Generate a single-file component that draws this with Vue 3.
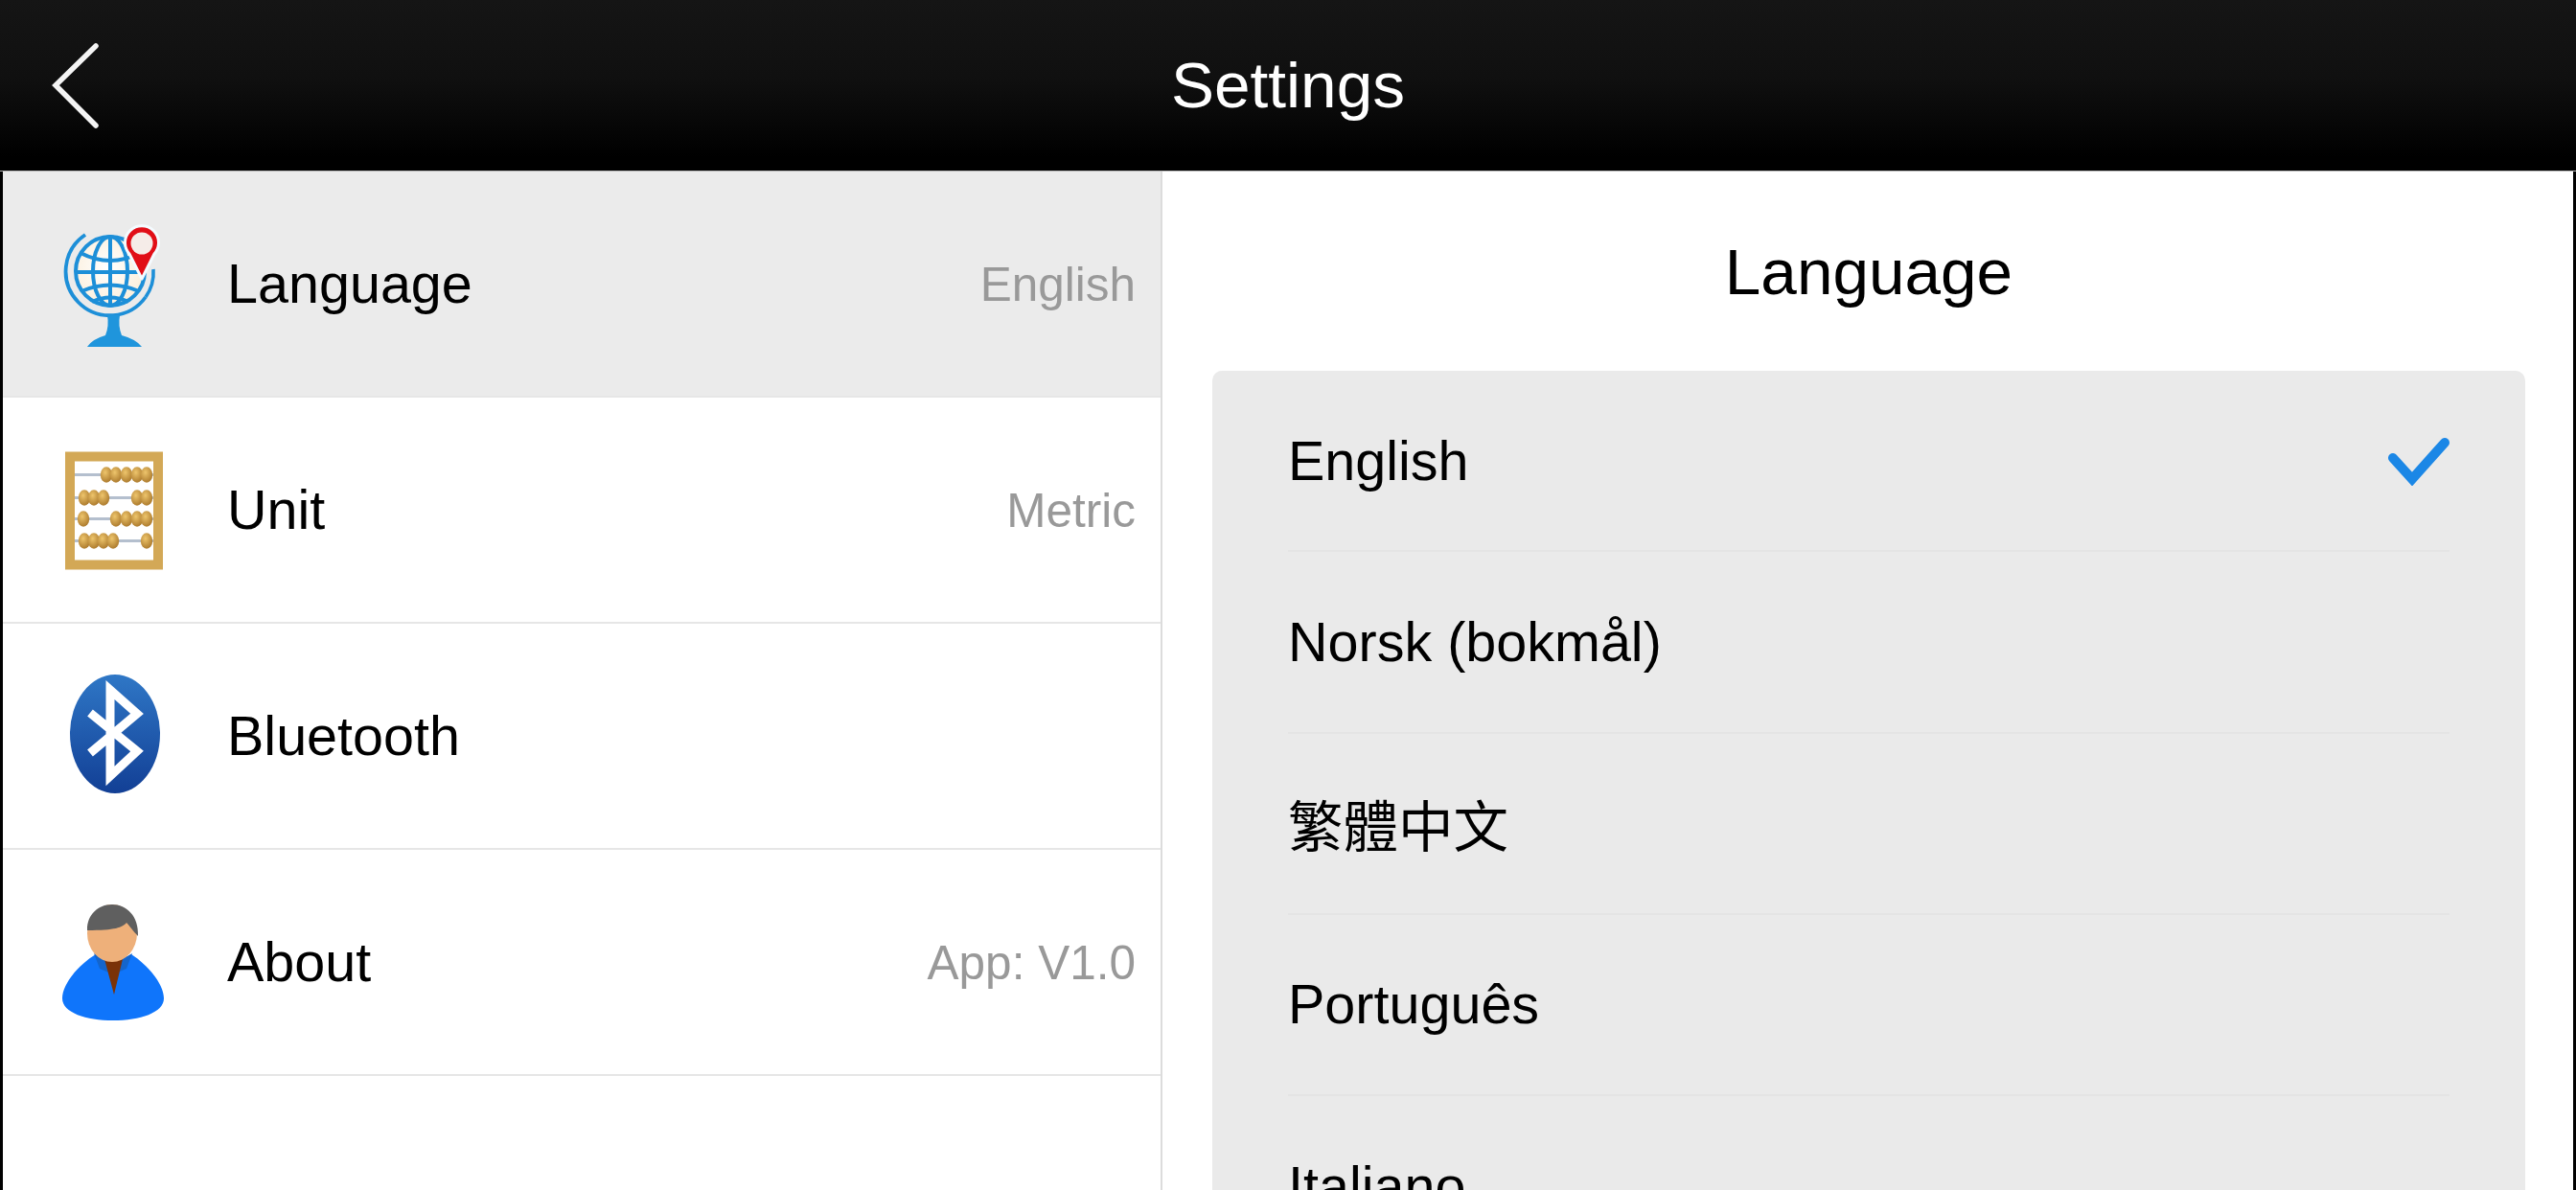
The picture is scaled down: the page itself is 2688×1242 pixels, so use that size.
<script setup>
const abacus = [
  { y: 33.5, beads: [51, 61, 72, 83, 93] },
  { y: 57.5, beads: [28, 38, 48, 83, 93] },
  { y: 79.5, beads: [27, 61, 72, 83, 93] },
  { y: 102.5, beads: [28, 38, 48, 58, 93] },
]
const languages = ['English', 'Norsk (bokmål)', '繁體中文', 'Português', 'Italiano']
</script>

<template>
  <div class="screen">
    <header class="topbar">
      <svg class="back" viewBox="0 0 60 100" aria-hidden="true">
        <path d="M46 6 L4 47 L46 89" />
      </svg>
      <h1 class="topbar-title">Settings</h1>
    </header>
    <div class="body">
      <aside class="sidebar">
        <div class="row active">
          <svg class="row-icon" viewBox="0 0 120 140" aria-hidden="true">
            <defs>
              <radialGradient id="sphere" cx="0.45" cy="0.45" r="0.6">
                <stop offset="0" stop-color="#ffffff" />
                <stop offset="1" stop-color="#fbeeda" />
              </radialGradient>
              <radialGradient id="bead" cx="0.4" cy="0.35" r="0.7">
                <stop offset="0" stop-color="#eec56c" />
                <stop offset="1" stop-color="#a9772a" />
              </radialGradient>
            </defs>
            <circle cx="55" cy="57" r="36" fill="url(#sphere)" />
            <g fill="none" stroke="#1d8fd8" stroke-width="4">
              <circle cx="55" cy="57" r="36" />
              <ellipse cx="55" cy="57" rx="18" ry="36" />
              <path d="M55 21 V93" />
              <path d="M24 38 Q55 54 86 38" />
              <path d="M19 58 H91" />
              <path d="M25 78 Q55 65 85 78" />
              <path d="M36 89 Q55 80 74 89" />
              <path d="M29 19 A46 46 0 1 0 92 84" stroke-width="3.8" />
              <path d="M100 55 A45 45 0 0 1 92 84" stroke-width="3.6" />
            </g>
            <path d="M31 136 Q36 128 50 124 Q54 114 52 103 H65 Q63 114 67 124 Q82 128 88 136 Z" fill="#1f95dc" />
            <path d="M88 65 L75 39 A17.5 17.5 0 1 1 101 39 Z" fill="#e10e17" stroke="#f4fbff" stroke-width="3" stroke-linejoin="round" />
            <circle cx="88" cy="28" r="11.5" fill="#f5ece8" />
          </svg>
          <span class="row-label">Language</span>
          <span class="row-value">English</span>
        </div>
        <div class="row">
          <svg class="row-icon" viewBox="0 0 120 140" aria-hidden="true">
            <rect x="13" y="14.5" width="92" height="113" fill="#fff" stroke="#d3a856" stroke-width="10" />
            <g v-for="rod in abacus" :key="rod.y">
              <path :d="`M18 ${rod.y} H100`" stroke="#b4bfce" stroke-width="3" />
              <ellipse
                v-for="x in rod.beads"
                :key="x"
                :cx="x"
                :cy="rod.y"
                rx="6.2"
                ry="8.2"
                fill="url(#bead)"
              />
            </g>
          </svg>
          <span class="row-label">Unit</span>
          <span class="row-value">Metric</span>
        </div>
        <div class="row">
          <svg class="row-icon" viewBox="0 0 120 140" aria-hidden="true">
            <defs>
              <linearGradient id="bt" x1="0" y1="0" x2="0" y2="1">
                <stop offset="0" stop-color="#2f77c6" />
                <stop offset="1" stop-color="#123f95" />
              </linearGradient>
            </defs>
            <ellipse cx="60" cy="68" rx="47" ry="62" fill="url(#bt)" />
            <path
              d="M34 46 L83 86 L55 112 V22 L83 47 L34 88"
              fill="none"
              stroke="#ffffff"
              stroke-width="9"
              stroke-linejoin="miter"
            />
          </svg>
          <span class="row-label">Bluetooth</span>
        </div>
        <div class="row">
          <svg class="row-icon" viewBox="0 -1 120 140" aria-hidden="true">
            <path d="M40 61 C22 72 5 92 5 107 C5 122 30 130 58 130 C86 130 111 122 111 107 C111 92 94 72 77 61 Q58 72 40 61 Z" fill="#0f75fb" />
            <path d="M38 60 Q58 74 78 60 L72 76 L58 82 L44 76 Z" fill="#1465cc" />
            <path d="M49 66 H68 L59 103 Z" fill="#7a3208" />
            <ellipse cx="57" cy="39" rx="26" ry="30" fill="#eeb07a" />
            <path d="M31 35 C31 20 42 9 57 9 C72 9 85 21 84 42 C79 37 75 31 72 28 C68 33 60 36 31 36 Z" fill="#5f5f5f" />
          </svg>
          <span class="row-label">About</span>
          <span class="row-value">App: V1.0</span>
        </div>
      </aside>
      <main class="detail">
        <h2 class="detail-title">Language</h2>
        <div class="card">
          <div v-for="(name, i) in languages" :key="name" class="lang">
            <span>{{ name }}</span>
            <svg v-if="i === 0" class="check" viewBox="0 0 70 52" aria-hidden="true">
              <path d="M9 23 L29 45 L63 7" />
            </svg>
          </div>
        </div>
      </main>
    </div>
  </div>
</template>

<style>
html, body { margin: 0; background: #000; overflow: hidden; }
</style>

<style scoped>
.screen {
  width: 2688px;
  height: 1242px;
  display: flex;
  flex-direction: column;
  overflow: hidden;
  background: #000;
  font-family: "Liberation Sans", Arial, "Noto Sans CJK TC", sans-serif;
  color: #000;
}
.topbar {
  height: 178px;
  flex: none;
  display: flex;
  align-items: center;
  justify-content: center;
  position: relative;
  background: linear-gradient(#151515 0%, #101010 45%, #060606 75%, #000 92%);
  border-bottom: 1px solid #b5b5b5;
}
.back {
  position: absolute;
  left: 54px;
  top: 42px;
  width: 60px;
  height: 100px;
}
.back path {
  fill: none;
  stroke: #f4f4f4;
  stroke-width: 5.5;
  stroke-linecap: round;
}
.topbar-title {
  margin: 0;
  font-size: 67.5px;
  font-weight: 400;
  color: #fff;
  position: relative;
  top: -1px;
}
.body {
  flex: 1;
  min-height: 0;
  display: flex;
  padding: 0 3px;
}
.sidebar {
  width: 1210px;
  flex: none;
  box-sizing: border-box;
  background: #fff;
  border-right: 2px solid #dcdcdc;
}
.row {
  height: 236px;
  box-sizing: border-box;
  display: flex;
  align-items: center;
  padding: 0 26px 0 57px;
  border-bottom: 2px solid #e6e6e6;
  background: #fff;
}
.row.active { background: #ebebeb; }
.row-icon {
  width: 120px;
  height: 140px;
  flex: none;
}
.row-label {
  margin-left: 57px;
  font-size: 57.5px;
  flex: 1;
}
.row-value {
  font-size: 49.5px;
  color: #999;
}
.detail {
  flex: 1;
  min-width: 0;
  background: #fff;
  display: flex;
  flex-direction: column;
  align-items: stretch;
  padding: 0 50px 0 52px;
}
.detail-title {
  margin: 0;
  height: 208px;
  flex: none;
  display: flex;
  align-items: center;
  justify-content: center;
  font-size: 67.5px;
  font-weight: 400;
}
.card {
  flex: 1;
  min-height: 0;
  overflow: hidden;
  background: #eaeaea;
  border-radius: 10px 10px 0 0;
  padding: 0 79px 0 79px;
}
.lang {
  height: 189.25px;
  box-sizing: border-box;
  display: flex;
  align-items: center;
  justify-content: space-between;
  font-size: 57.5px;
  border-bottom: 2px solid #e4e4e4;
}
.check {
  width: 70px;
  height: 52px;
  flex: none;
  margin-right: -2px;
}
.check path {
  fill: none;
  stroke: #1b87e6;
  stroke-width: 10;
  stroke-linejoin: miter;
  stroke-linecap: round;
}
</style>
